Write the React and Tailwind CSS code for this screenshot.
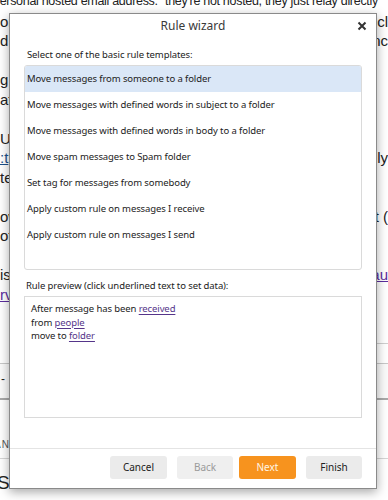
import React from 'react';

const templates = [
  'Move messages from someone to a folder',
  'Move messages with defined words in subject to a folder',
  'Move messages with defined words in body to a folder',
  'Move spam messages to Spam folder',
  'Set tag for messages from somebody',
  'Apply custom rule on messages I receive',
  'Apply custom rule on messages I send',
];

// fragments of the forum post that peek out around the dialog
const pageLines = [
  ['on', 'cl'],
  ['d', 'nc'],
  ['', ''],
  ['g.', ''],
  ['ati', ''],
  ['', ''],
  ['UT', ''],
  [':t', 'lly'],
  ['te', ''],
  ['', ''],
  ['ow', 'rt ('],
  ['ot', ''],
  ['', ''],
  ['is', 'au'],
  ['rv', ''],
];

const LinkText = ({ children }) => (
  <span className="text-[#55358a] underline underline-offset-[2px] cursor-pointer">{children}</span>
);

const Button = ({ children, variant = 'default', className = '' }) => {
  const styles = {
    default: 'bg-[#ebebeb] text-[#222]',
    disabled: 'bg-[#efefef] text-[#9a9a9a]',
    primary: 'bg-[#f7931e] text-[#fff6e6]',
  };
  return (
    <button className={`h-[23px] rounded-[3px] text-[10px] flex items-center justify-center ${styles[variant]} ${className}`}>
      {children}
    </button>
  );
};

const PageBehind = () => (
  <div className="-mt-[8px] font-['Liberation_Sans',Arial,sans-serif] text-[15px] leading-[19.5px] text-[#222]">
    <div className="whitespace-nowrap -ml-[7px] text-[12.5px] tracking-[-0.3px]">personal hosted email address. "they're not hosted, they just relay directly</div>
    {pageLines.map(([left, right], i) => (
      <div key={i} className="h-[19.5px] flex justify-between whitespace-nowrap">
        <span className={i === 7 ? 'underline text-[#1a4f8a]' : i === 14 ? 'underline text-[#5b2d9e]' : ''}>{left}</span>
        <span className={i === 13 ? 'underline text-[#5b2d9e]' : ''}>{right}</span>
      </div>
    ))}
    <div className="h-[39px]" />
    <div className="flex justify-end">
      <div className="w-[14px] border-t border-[#cfcfcf]" />
    </div>
    <div className="h-[19px]" />
    <div className="border-t border-[#c8c8c8] h-[35px] bg-[#fafafa] text-[12px] leading-[30px] pl-[1px]">-</div>
    <div className="border-t-2 border-[#a9a9a9] h-[53px] flex items-end">
      <span className="text-[10px] tracking-[1px] text-[#555] leading-[12px] -ml-[6px]">ANN</span>
    </div>
    <div className="border-t border-[#d6d6d6] mt-[7px] pt-[14px] text-[19px] leading-[20px] -ml-[3px]">S</div>
  </div>
);

export default function App() {
  return (
    <div className="relative w-[388px] h-[500px] overflow-hidden bg-white">
      <PageBehind />

      {/* Rule wizard dialog */}
      <div className="absolute left-[9px] top-[13px] w-[368px] h-[476px] bg-white border border-[#8a8a8a] shadow-[0_3px_10px_rgba(0,0,0,0.35)] flex flex-col font-['Noto_Sans','Open_Sans',sans-serif] text-[#222]">
        <div className="relative h-[22px] shrink-0 flex items-center justify-center">
          <span className="text-[12px] text-[#3a3a3a] mt-[2px]">Rule wizard</span>
          <button className="absolute right-[9px] top-[7px] w-[10px] h-[10px]">
            <svg viewBox="0 0 10 10" className="w-[10px] h-[10px]">
              <path d="M1.5 1.5 L8.5 8.5 M8.5 1.5 L1.5 8.5" stroke="#333" strokeWidth="2" />
            </svg>
          </button>
        </div>

        <div className="px-[14px] flex flex-col flex-1 text-[9.5px] tracking-[-0.1px]">
          <p className="mt-[12px] mb-[3px] pl-[3px] leading-[14px]">Select one of the basic rule templates:</p>
          <div className="h-[205px] shrink-0 border border-[#dadada] rounded-[3px] overflow-hidden">
            {templates.map((t, i) => (
              <div
                key={t}
                className={`h-[26px] flex items-center pl-[2px] whitespace-nowrap ${i === 0 ? 'bg-[#dae7f7]' : ''}`}
              >
                {t}
              </div>
            ))}
          </div>

          <p className="mt-[9px] mb-[3px] pl-[2px] leading-[14px]">Rule preview (click underlined text to set data):</p>
          <div className="h-[122px] shrink-0 border border-[#dadada] pt-[5px] pl-[6px] leading-[13.5px]">
            <div>After message has been <LinkText>received</LinkText></div>
            <div>from <LinkText>people</LinkText></div>
            <div>move to <LinkText>folder</LinkText></div>
          </div>
          <div className="flex-1" />
        </div>

        <div className="border-t border-[#e4e4e4] pt-[7px] pb-[9px] pr-[14px] flex justify-end">
          <Button className="w-[57px]">Cancel</Button>
          <Button variant="disabled" className="w-[56px] ml-[10px]">Back</Button>
          <Button variant="primary" className="w-[57px] ml-[6px]">Next</Button>
          <Button className="w-[56px] ml-[10px]">Finish</Button>
        </div>
      </div>
    </div>
  );
}
